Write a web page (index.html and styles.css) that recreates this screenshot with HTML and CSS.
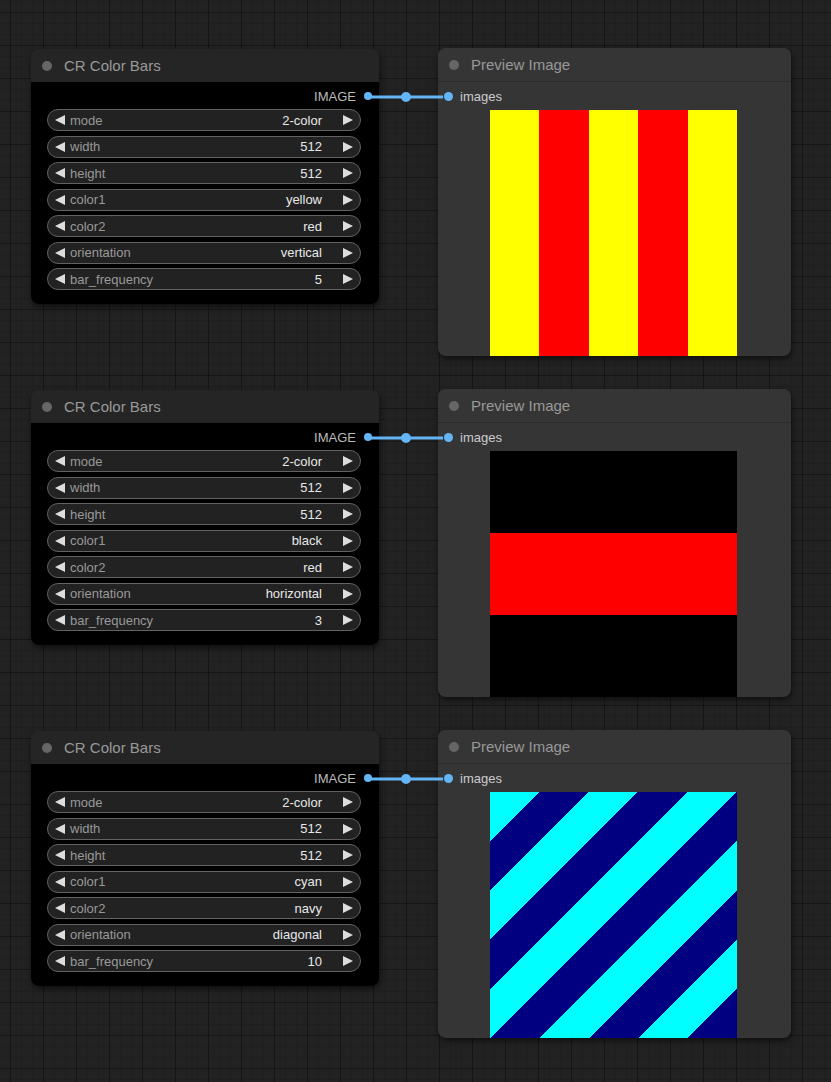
FILE: index.html
```html
<!DOCTYPE html>
<html>
<head>
<meta charset="utf-8">
<link rel="stylesheet" href="styles.css">
</head>
<body>
<div class="canvas">

  <div class="row">
    <div class="node cr">
      <div class="title"><span class="dot"></span>CR Color Bars</div>
      <div class="body">
        <div class="out">IMAGE<span class="slot"></span></div>
        <div class="widgets">
          <div class="w"><span class="al"></span><span class="lbl">mode</span><span class="val">2-color</span><span class="ar"></span></div>
          <div class="w"><span class="al"></span><span class="lbl">width</span><span class="val">512</span><span class="ar"></span></div>
          <div class="w"><span class="al"></span><span class="lbl">height</span><span class="val">512</span><span class="ar"></span></div>
          <div class="w"><span class="al"></span><span class="lbl">color1</span><span class="val">yellow</span><span class="ar"></span></div>
          <div class="w"><span class="al"></span><span class="lbl">color2</span><span class="val">red</span><span class="ar"></span></div>
          <div class="w"><span class="al"></span><span class="lbl">orientation</span><span class="val">vertical</span><span class="ar"></span></div>
          <div class="w"><span class="al"></span><span class="lbl">bar_frequency</span><span class="val">5</span><span class="ar"></span></div>
        </div>
      </div>
    </div>
    <div class="node preview">
      <div class="title"><span class="dot"></span>Preview Image</div>
      <div class="body">
        <div class="in"><span class="slot"></span>images</div>
        <div class="img bars-v"></div>
      </div>
    </div>
    <svg class="wire" width="100" height="16" viewBox="0 0 100 16"><line x1="10" y1="8" x2="85" y2="8" stroke="#64b5f6" stroke-width="3"/><circle cx="48" cy="8" r="5" fill="#64b5f6"/></svg>
  </div>

  <div class="row">
    <div class="node cr">
      <div class="title"><span class="dot"></span>CR Color Bars</div>
      <div class="body">
        <div class="out">IMAGE<span class="slot"></span></div>
        <div class="widgets">
          <div class="w"><span class="al"></span><span class="lbl">mode</span><span class="val">2-color</span><span class="ar"></span></div>
          <div class="w"><span class="al"></span><span class="lbl">width</span><span class="val">512</span><span class="ar"></span></div>
          <div class="w"><span class="al"></span><span class="lbl">height</span><span class="val">512</span><span class="ar"></span></div>
          <div class="w"><span class="al"></span><span class="lbl">color1</span><span class="val">black</span><span class="ar"></span></div>
          <div class="w"><span class="al"></span><span class="lbl">color2</span><span class="val">red</span><span class="ar"></span></div>
          <div class="w"><span class="al"></span><span class="lbl">orientation</span><span class="val">horizontal</span><span class="ar"></span></div>
          <div class="w"><span class="al"></span><span class="lbl">bar_frequency</span><span class="val">3</span><span class="ar"></span></div>
        </div>
      </div>
    </div>
    <div class="node preview">
      <div class="title"><span class="dot"></span>Preview Image</div>
      <div class="body">
        <div class="in"><span class="slot"></span>images</div>
        <div class="img bars-h"></div>
      </div>
    </div>
    <svg class="wire" width="100" height="16" viewBox="0 0 100 16"><line x1="10" y1="8" x2="85" y2="8" stroke="#64b5f6" stroke-width="3"/><circle cx="48" cy="8" r="5" fill="#64b5f6"/></svg>
  </div>

  <div class="row">
    <div class="node cr">
      <div class="title"><span class="dot"></span>CR Color Bars</div>
      <div class="body">
        <div class="out">IMAGE<span class="slot"></span></div>
        <div class="widgets">
          <div class="w"><span class="al"></span><span class="lbl">mode</span><span class="val">2-color</span><span class="ar"></span></div>
          <div class="w"><span class="al"></span><span class="lbl">width</span><span class="val">512</span><span class="ar"></span></div>
          <div class="w"><span class="al"></span><span class="lbl">height</span><span class="val">512</span><span class="ar"></span></div>
          <div class="w"><span class="al"></span><span class="lbl">color1</span><span class="val">cyan</span><span class="ar"></span></div>
          <div class="w"><span class="al"></span><span class="lbl">color2</span><span class="val">navy</span><span class="ar"></span></div>
          <div class="w"><span class="al"></span><span class="lbl">orientation</span><span class="val">diagonal</span><span class="ar"></span></div>
          <div class="w"><span class="al"></span><span class="lbl">bar_frequency</span><span class="val">10</span><span class="ar"></span></div>
        </div>
      </div>
    </div>
    <div class="node preview">
      <div class="title"><span class="dot"></span>Preview Image</div>
      <div class="body">
        <div class="in"><span class="slot"></span>images</div>
        <div class="img bars-d"></div>
      </div>
    </div>
    <svg class="wire" width="100" height="16" viewBox="0 0 100 16"><line x1="10" y1="8" x2="85" y2="8" stroke="#64b5f6" stroke-width="3"/><circle cx="48" cy="8" r="5" fill="#64b5f6"/></svg>
  </div>

</div>
</body>
</html>
```

FILE: styles.css
```css
html, body {
  margin: 0;
  padding: 0;
}
body {
  width: 831px;
  height: 1082px;
  overflow: hidden;
  background-color: #222222;
  background-image:
    linear-gradient(to right, rgba(0,0,0,0.28) 1px, transparent 1px),
    linear-gradient(to bottom, rgba(0,0,0,0.28) 1px, transparent 1px),
    linear-gradient(to right, rgba(0,0,0,0.10) 1px, transparent 1px),
    linear-gradient(to bottom, rgba(0,0,0,0.10) 1px, transparent 1px);
  background-size: 33px 33px, 33px 33px, 11px 11px, 11px 11px;
  background-position: 10px 12px, 10px 12px, 10px 12px, 10px 12px;
  font-family: "Liberation Sans", Arial, sans-serif;
}
.canvas {
  display: flex;
  flex-direction: column;
  gap: 33px;
  padding: 48px 0 0 31px;
}
.row {
  position: relative;
  display: flex;
  align-items: flex-start;
  gap: 59px;
}
.node {
  border-radius: 8px;
  box-shadow: 1px 3px 6px rgba(0,0,0,0.55);
  overflow: hidden;
}
.title {
  display: flex;
  align-items: center;
  padding-left: 11px;
  font-size: 15px;
  color: #999;
}
.dot {
  width: 10px;
  height: 10px;
  border-radius: 50%;
  background: #666;
  margin-right: 12px;
}
.cr {
  width: 348px;
  margin-top: 1px;
}
.cr .title {
  height: 33px;
  background: #252525;
}
.cr .body {
  background: #000;
  padding: 4px 0 14px;
}
.out {
  height: 20px;
  display: flex;
  align-items: center;
  justify-content: flex-end;
  padding-right: 7px;
  font-size: 13px;
  color: #bbb;
}
.out .slot {
  width: 8px;
  height: 8px;
  border-radius: 50%;
  background: #64b5f6;
  margin-left: 8px;
}
.widgets {
  display: flex;
  flex-direction: column;
  gap: 4.5px;
  padding: 3px 18px 0 16px;
}
.w {
  height: 20px;
  display: flex;
  align-items: center;
  border: 1px solid #626262;
  border-radius: 12px;
  background: #222;
  padding: 0 7px 0 7px;
  font-size: 13px;
}
.al {
  width: 0;
  height: 0;
  border-top: 5.5px solid transparent;
  border-bottom: 5.5px solid transparent;
  border-right: 10px solid #ddd;
  margin-right: 5px;
}
.ar {
  width: 0;
  height: 0;
  border-top: 5.5px solid transparent;
  border-bottom: 5.5px solid transparent;
  border-left: 10px solid #ddd;
}
.lbl {
  flex: 1;
  color: #999;
}
.val {
  color: #e8e8e8;
  margin-right: 21px;
}
.preview {
  width: 353px;
  background: #353535;
}
.preview .title {
  height: 33px;
  background: #353535;
  border-bottom: 1px solid #2b2b2b;
}
.preview .body {
  display: flex;
  flex-direction: column;
  align-items: flex-start;
}
.in {
  align-self: stretch;
  height: 20px;
  margin-top: 4px;
  display: flex;
  align-items: center;
  padding-left: 6px;
  font-size: 13px;
  color: #ccc;
}
.in .slot {
  width: 9px;
  height: 9px;
  border-radius: 50%;
  background: #64b5f6;
  margin-right: 7px;
}
.img {
  width: 247px;
  height: 246px;
  margin: 4px 0 0 52px;
}
.bars-v {
  background: linear-gradient(to right,
    #ffff00 0 20%, #ff0000 20% 40%, #ffff00 40% 60%, #ff0000 60% 80%, #ffff00 80% 100%);
}
.bars-h {
  background: linear-gradient(to bottom,
    #000 0 33.333%, #ff0000 33.333% 66.667%, #000 66.667% 100%);
}
.bars-d {
  background: linear-gradient(135deg,
    #00ffff 0 10%, #000080 10% 20%, #00ffff 20% 30%, #000080 30% 40%,
    #00ffff 40% 50%, #000080 50% 60%, #00ffff 60% 70%, #000080 70% 80%,
    #00ffff 80% 90%, #000080 90% 100%);
}
.wire {
  position: absolute;
  left: 327px;
  top: 41px;
  pointer-events: none;
}
```
